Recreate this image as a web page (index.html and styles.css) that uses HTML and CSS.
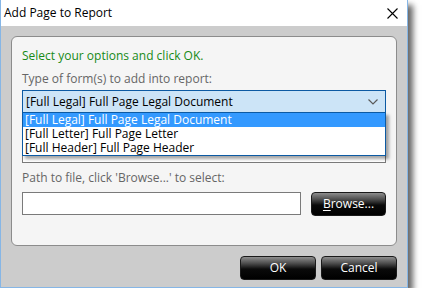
FILE: index.html
```html
<!DOCTYPE html>
<html>
<head>
<meta charset="utf-8">
<link rel="stylesheet" href="styles.css">
</head>
<body>
<div class="window">
  <div class="titlebar">
    <span class="title">Add Page to Report</span>
    <svg class="close" width="11" height="11" viewBox="0 0 11 11"><path d="M0.5 0.5 L10.5 10.5 M10.5 0.5 L0.5 10.5" stroke="#000" stroke-width="1.1" fill="none"/></svg>
  </div>
  <div class="content">
    <div class="panel">
      <div class="intro">Select your options and click OK.</div>
      <div class="label">Type of form(s) to add into report:</div>
      <div class="combo">
        <span class="combo-text">[Full Legal] Full Page Legal Document</span>
        <svg class="chev" width="10" height="6" viewBox="0 0 10 6"><path d="M0.5 0.5 L5 5 L9.5 0.5" stroke="#5a5a5a" stroke-width="1.2" fill="none"/></svg>
        <div class="list">
          <div class="item selected">[Full Legal] Full Page Legal Document</div>
          <div class="item">[Full Letter] Full Page Letter</div>
          <div class="item">[Full Header] Full Page Header</div>
        </div>
      </div>
      <div class="memo"></div>
      <div class="label label2">Path to file, click 'Browse...' to select:</div>
      <div class="row">
        <div class="textbox"></div>
        <button class="btn browse"><u>B</u>rowse...</button>
      </div>
    </div>
    <div class="footer">
      <button class="btn">OK</button>
      <button class="btn">Cancel</button>
    </div>
  </div>
</div>
</body>
</html>
```
FILE: styles.css
```css
html, body {
  margin: 0;
  padding: 0;
  background: #ffffff;
}
body {
  font-family: "Open Sans", "Noto Sans", sans-serif;
  font-size: 12px;
}
.window {
  width: 408px;
  height: 288px;
  box-sizing: border-box;
  border: 1px solid #86b6e6;
  border-top: none;
  background: #cccccc;
  box-shadow: 5px 5px 6px rgba(0, 0, 0, 0.6);
}
.titlebar {
  height: 26px;
  background: #ffffff;
  display: flex;
  align-items: center;
  justify-content: space-between;
  padding: 0 9px 0 3px;
}
.title {
  color: #000;
  line-height: 26px;
}
.close {
  display: block;
}
.content {
  padding: 10px 10px 0 10px;
}
.panel {
  height: 210px;
  box-sizing: border-box;
  border: 1px solid #8c8c8c;
  border-radius: 6px;
  background: #f5f5f5;
  padding: 0 10px;
}
.intro {
  margin-top: 11px;
  line-height: 16px;
  color: #178a17;
}
.label {
  margin-top: 7px;
  line-height: 16px;
  color: #666666;
}
.combo {
  position: relative;
  margin-top: 3px;
  height: 23px;
  box-sizing: border-box;
  border: 1px solid #0c5aa3;
  background: #cce4f7;
  display: flex;
  align-items: center;
  justify-content: space-between;
  padding: 0 7px 0 3px;
  color: #000;
  z-index: 2;
}
.combo-text {
  line-height: 16px;
}
.chev {
  display: block;
}
.list {
  position: absolute;
  left: -1px;
  right: -1px;
  top: 21px;
  border: 1px solid #0c5aa3;
  background: #ffffff;
  box-shadow: 3px 3px 3px rgba(0, 0, 0, 0.35);
}
.item {
  height: 14px;
  line-height: 14px;
  padding-left: 2px;
  color: #000;
  white-space: nowrap;
}
.item.selected {
  background: #3399ff;
  color: #ffffff;
}
.memo {
  margin-top: 27px;
  height: 23px;
  box-sizing: border-box;
  border: 1px solid #7a7a7a;
  background: #ffffff;
}
.label2 {
  margin-top: 7px;
}
.row {
  margin-top: 6px;
  display: flex;
  gap: 10px;
  align-items: flex-start;
}
.textbox {
  flex: 1;
  height: 23px;
  box-sizing: border-box;
  border: 1px solid #7a7a7a;
  background: #ffffff;
}
.btn {
  width: 76px;
  height: 24px;
  box-sizing: border-box;
  border: 1px solid #1a1a1a;
  border-radius: 4px;
  background: linear-gradient(to bottom, #8e8e8e 0%, #4a4a4a 30%, #0a0a0a 55%, #000000 100%);
  color: #ffffff;
  font-family: "Open Sans", "Noto Sans", sans-serif;
  font-size: 12px;
  padding: 0;
  line-height: 20px;
  text-align: center;
}
.btn u {
  text-decoration: underline;
  text-underline-offset: 2px;
}
.browse {
  width: 75px;
}
.footer {
  margin-top: 10px;
  display: flex;
  justify-content: flex-end;
  gap: 5px;
}
```
